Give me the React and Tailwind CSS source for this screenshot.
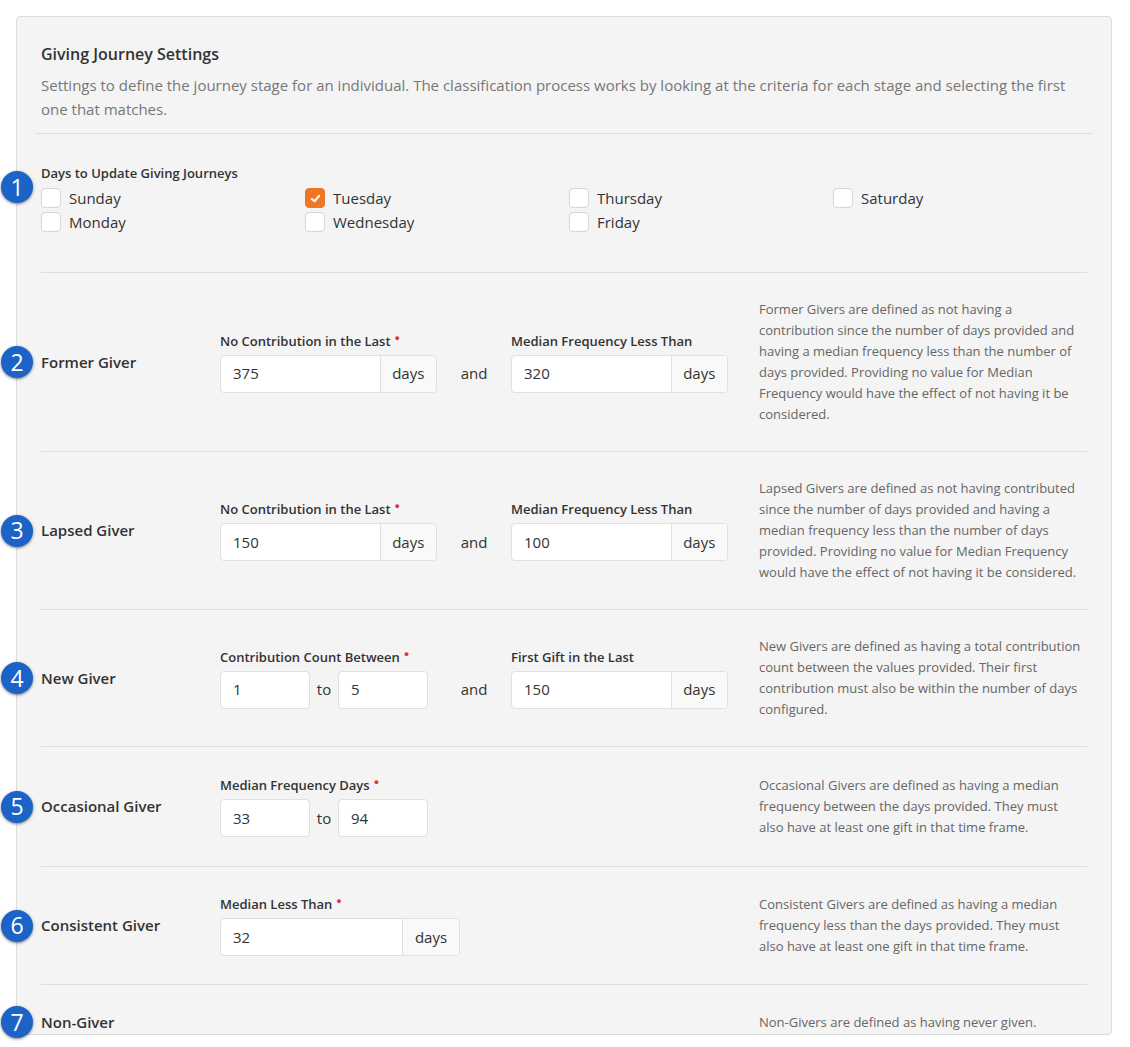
import React from "react";

const F = { fontFamily: '"Open Sans", sans-serif' };

function Badge({ n }) {
  return (
    <div className="absolute -left-[40px] top-1/2 -translate-y-1/2 w-[32px] h-[32px] rounded-full bg-[#1b63c6] text-white text-[23px] flex items-center justify-center shadow-[0_1px_3px_rgba(0,0,0,0.5)] leading-none">
      {n}
    </div>
  );
}

function Label({ children, req }) {
  return (
    <div className="text-[13px] font-semibold text-[#333] mb-[5px] leading-[18px] flex">
      {children}
      {req && <span className="text-[#d9363e] text-[9px] ml-[4px] -mt-[3px]">●</span>}
    </div>
  );
}

function Addon({ value, w = "w-[160px]" }) {
  return (
    <div className="flex h-[38px] border border-[#dfe0e1] rounded-[4px] bg-white text-[15px] text-[#333]">
      <div className={`${w} px-3 flex items-center`}>{value}</div>
      <div className="w-[57px] border-l border-[#dfe0e1] bg-[#f9f9f9] flex items-center justify-center rounded-r-[4px]">days</div>
    </div>
  );
}

function Small({ value }) {
  return (
    <div className="w-[90px] h-[38px] border border-[#dfe0e1] rounded-[4px] bg-white px-3 flex items-center text-[15px] text-[#333]">{value}</div>
  );
}

function Range({ a, b }) {
  return (
    <div className="flex items-center">
      <Small value={a} />
      <span className="w-[28px] text-center text-[15px] text-[#333]">to</span>
      <Small value={b} />
    </div>
  );
}

function Row({ n, title, desc, children, last, py = "py-[24px]" }) {
  return (
    <div className={`relative flex items-center ${last ? "" : "border-b border-[#dcdcdc]"} ${py}`}>
      <Badge n={n} />
      <div className="w-[179px] text-[15px] font-semibold text-[#333]">{title}</div>
      <div className="w-[539px] flex items-end">{children}</div>
      <div className="w-[326px] text-[13px] leading-[21px] text-[#666]">{desc}</div>
    </div>
  );
}

function And() {
  return <div className="w-[74px] h-[38px] flex items-center justify-center text-[15px] text-[#333]">and</div>;
}

function G({ children }) {
  return <div className="w-[217px]">{children}</div>;
}

function Check({ label, checked }) {
  return (
    <div className="flex items-center h-[24px]">
      <div className={`w-[20px] h-[20px] rounded-[4px] border flex items-center justify-center ${checked ? "bg-[#ee7624] border-[#ee7624]" : "bg-white border-[#d5d5d5]"}`}>
        {checked && (
          <svg width="11" height="11" viewBox="0 0 12 12"><path d="M2 6.5 L5 9 L10 3" stroke="white" strokeWidth="2.2" fill="none" strokeLinecap="round" strokeLinejoin="round" /></svg>
        )}
      </div>
      <span className="ml-[8px] text-[15px] text-[#333]">{label}</span>
    </div>
  );
}

export default function App() {
  return (
    <div style={F} className="bg-white w-[1130px] h-[1047px] pt-[16px] pl-[16px]">
      <div className="w-[1096px] h-[1019px] bg-[#f4f4f4] border border-[#dcdcdc] rounded-[4px] px-[21px]">
        <div className="pt-[25px] pb-[12px] border-b border-[#dcdcdc] -mx-[3px] px-[6px]">
          <div className="text-[16px] font-semibold text-[#333] leading-[24px]">Giving Journey Settings</div>
          <div className="mt-[7px] text-[15px] leading-[24px] text-[#777] pr-4">
            Settings to define the journey stage for an individual. The classification process works by looking at the criteria for each stage and selecting the first one that matches.
          </div>
        </div>
        <div className="pl-[3px] pr-[3px]">
          <div className="relative border-b border-[#dcdcdc] pt-[29px] pb-[38px]">
            <div className="absolute -left-[40px] top-[37px] w-[32px] h-[32px] rounded-full bg-[#1b63c6] text-white text-[23px] flex items-center justify-center shadow-[0_1px_3px_rgba(0,0,0,0.5)]">1</div>
            <div className="text-[13px] font-semibold text-[#333] leading-[20px] mb-[3px]">Days to Update Giving Journeys</div>
            <div className="grid grid-cols-4 w-[1056px]">
              <div><Check label="Sunday" /><Check label="Monday" /></div>
              <div><Check label="Tuesday" checked /><Check label="Wednesday" /></div>
              <div><Check label="Thursday" /><Check label="Friday" /></div>
              <div><Check label="Saturday" /></div>
            </div>
          </div>
          <Row n={2} py="py-[26px]" title="Former Giver" desc="Former Givers are defined as not having a contribution since the number of days provided and having a median frequency less than the number of days provided. Providing no value for Median Frequency would have the effect of not having it be considered.">
            <G><Label req>No Contribution in the Last</Label><Addon value="375" /></G>
            <And />
            <G><Label>Median Frequency Less Than</Label><Addon value="320" /></G>
          </Row>
          <Row n={3} py="py-[26px]" title="Lapsed Giver" desc="Lapsed Givers are defined as not having contributed since the number of days provided and having a median frequency less than the number of days provided. Providing no value for Median Frequency would have the effect of not having it be considered.">
            <G><Label req>No Contribution in the Last</Label><Addon value="150" /></G>
            <And />
            <G><Label>Median Frequency Less Than</Label><Addon value="100" /></G>
          </Row>
          <Row n={4} py="py-[26px]" title="New Giver" desc="New Givers are defined as having a total contribution count between the values provided. Their first contribution must also be within the number of days configured.">
            <G><Label req>Contribution Count Between</Label><Range a="1" b="5" /></G>
            <And />
            <G><Label>First Gift in the Last</Label><Addon value="150" /></G>
          </Row>
          <Row n={5} py="py-[28px]" title="Occasional Giver" desc="Occasional Givers are defined as having a median frequency between the days provided. They must also have at least one gift in that time frame.">
            <G><Label req>Median Frequency Days</Label><Range a="33" b="94" /></G>
          </Row>
          <Row n={6} py="py-[27px]" title="Consistent Giver" desc="Consistent Givers are defined as having a median frequency less than the days provided. They must also have at least one gift in that time frame.">
            <div><Label req>Median Less Than</Label><Addon value="32" w="w-[181px]" /></div>
          </Row>
          <Row n={7} py="py-[26px]" title="Non-Giver" last desc="Non-Givers are defined as having never given.">
            <div />
          </Row>
        </div>
      </div>
    </div>
  );
}
